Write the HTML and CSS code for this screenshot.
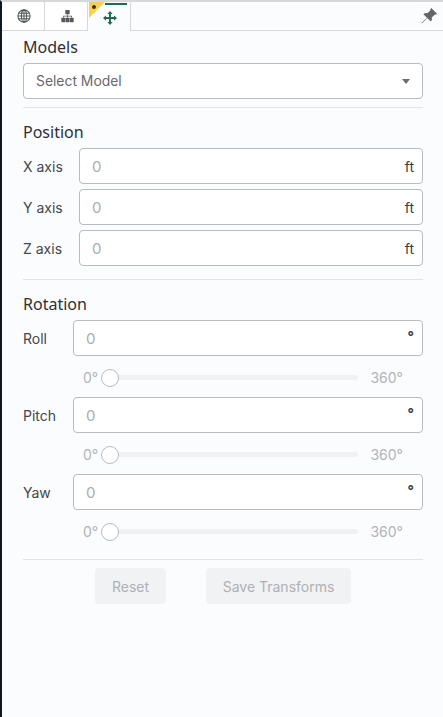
FILE: index.html
```html
<!DOCTYPE html>
<html lang="en">
<head>
    <meta charset="UTF-8">
    <title>Transforms</title>
    <link rel="stylesheet" href="styles.css">
</head>
<body>
    <div class="panel">
        <div class="tabs">
            <div class="tab">
                <svg width="14" height="14" viewBox="0 0 16 16" fill="none" stroke="#55585c" stroke-width="1.2">
                    <circle cx="8" cy="8" r="7"/>
                    <ellipse cx="8" cy="8" rx="3" ry="7"/>
                    <path d="M8 1V15M1 8H15M2 4.800H14M2 11.200H14"/>
                </svg>
            </div>
            <div class="tab">
                <svg width="15" height="14" viewBox="0 0 16 16" fill="#55585c">
                    <rect x="5.500" y="1" width="5" height="5" rx=".5"/>
                    <rect x="1" y="10" width="4.400" height="5" rx=".5"/>
                    <rect x="5.800" y="10" width="4.400" height="5" rx=".5"/>
                    <rect x="10.600" y="10" width="4.400" height="5" rx=".5"/>
                    <path d="M7.600 6h.8v1.800h4.600v2.200h-.8V8.600H8.400V10h-.8V8.600H3.800V10H3V7.800h4.600z"/>
                </svg>
            </div>
            <div class="tab tab-active">
                <span class="badge"><span class="badge-dot"></span></span>
                <svg width="14" height="14" viewBox="0 0 16 16" fill="#1f6b57">
                    <path d="M8 0 11 3.400H9.100V6.900H12.600V5L16 8 12.600 11V9.100H9.100V12.600H11L8 16 5 12.600H6.900V9.100H3.400V11L0 8 3.400 5V6.900H6.900V3.400H5Z"/>
                </svg>
            </div>
            <div class="tabs-fill">
                <svg width="18" height="18" viewBox="0 0 18 18" fill="#62666b">
                    <path d="M11.300 1 17 6.700l-1.200 1.100-.9-.4-3.200 3.200c.5 1.500.1 3-.9 4L7.300 11.100 2.400 16 1.500 16.600 2 15.600 6.900 10.700 3.400 7.200c1-1 2.500-1.400 4-.9l3.200-3.200-.4-.9z"/>
                </svg>
            </div>
        </div>

        <div class="content">
            <section class="section">
                <h2 class="title">Models</h2>
                <div class="select">
                    <span>Select Model</span>
                    <span class="caret"></span>
                </div>
            </section>

            <section class="section">
                <h2 class="title">Position</h2>
                <div class="rows">
                    <div class="row">
                        <label class="label">X axis</label>
                        <div class="input"><span class="value">0</span><span class="unit">ft</span></div>
                    </div>
                    <div class="row">
                        <label class="label">Y axis</label>
                        <div class="input"><span class="value">0</span><span class="unit">ft</span></div>
                    </div>
                    <div class="row">
                        <label class="label">Z axis</label>
                        <div class="input"><span class="value">0</span><span class="unit">ft</span></div>
                    </div>
                </div>
            </section>

            <section class="section section-rotation">
                <h2 class="title">Rotation</h2>
                <div class="row row-angle">
                    <label class="label">Roll</label>
                    <div class="input"><span class="value">0</span><span class="unit unit-deg">°</span></div>
                </div>
                <div class="slider">
                    <span>0°</span>
                    <div class="track"><span class="thumb"></span></div>
                    <span>360°</span>
                </div>
                <div class="row row-angle">
                    <label class="label">Pitch</label>
                    <div class="input"><span class="value">0</span><span class="unit unit-deg">°</span></div>
                </div>
                <div class="slider">
                    <span>0°</span>
                    <div class="track"><span class="thumb"></span></div>
                    <span>360°</span>
                </div>
                <div class="row row-angle">
                    <label class="label">Yaw</label>
                    <div class="input"><span class="value">0</span><span class="unit unit-deg">°</span></div>
                </div>
                <div class="slider">
                    <span>0°</span>
                    <div class="track"><span class="thumb"></span></div>
                    <span>360°</span>
                </div>
            </section>

            <div class="actions">
                <button class="btn btn-reset">Reset</button>
                <button class="btn">Save Transforms</button>
            </div>
        </div>
    </div>
</body>
</html>
```

FILE: styles.css
```css
* {
    margin: 0;
    padding: 0;
    box-sizing: border-box;
}

html, body {
    height: 100%;
}

body {
    background: #fbfcfe;
    font-family: Inter, "Liberation Sans", sans-serif;
    color: #3a3d40;
    overflow: hidden;
}

.panel {
    height: 100%;
    border-left: 2px solid #10181f;
    border-top: 2px solid #d6d8da;
}

/* tab strip */
.tabs {
    display: flex;
    height: 29px;
}

.tab {
    width: 43px;
    display: flex;
    align-items: center;
    justify-content: center;
    padding-left: 2px;
    border-right: 1px solid #d6d8da;
    border-bottom: 1px solid #d6d8da;
    background: #fff;
    position: relative;
}

.tab-active {
    border-bottom: none;
    background: #fbfcfe;
}

.tab-active::before {
    content: '';
    position: absolute;
    top: 1px;
    left: 17px;
    right: 3px;
    height: 2px;
    background: #1f6b57;
}

.tab-active svg {
    margin-top: 2px;
}

.badge {
    position: absolute;
    top: 0;
    left: 1px;
    width: 16px;
    height: 16px;
    background: #fbd14b;
    clip-path: polygon(0 0, 100% 0, 0 100%);
    z-index: 1;
}

.badge-dot {
    position: absolute;
    top: 3px;
    left: 3px;
    width: 4px;
    height: 4px;
    border-radius: 50%;
    background: #333;
}

.tabs-fill {
    flex: 1;
    display: flex;
    justify-content: flex-end;
    align-items: center;
    padding-right: 5px;
    border-bottom: 1px solid #d6d8da;
}

/* form */
.content {
    padding: 6px 20px 0 21px;
}

.section {
    padding-bottom: 8px;
    border-bottom: 1px solid #e3e4e6;
    margin-bottom: 14px;
}

.section:nth-child(2) {
    padding-bottom: 13px;
}

.section-rotation {
    padding-bottom: 8px;
    margin-bottom: 8px;
}

.title {
    font-family: "Noto Sans", sans-serif;
    font-size: 16px;
    font-weight: 400;
    line-height: 21px;
    color: #2e3033;
    margin-bottom: 5px;
}

.select {
    height: 36px;
    display: flex;
    align-items: center;
    justify-content: space-between;
    padding: 0 12px;
    background: #fff;
    border: 1px solid #b9bbbe;
    border-radius: 4px;
    font-size: 13.900px;
    color: #66696d;
}

.caret {
    border-left: 4.500px solid transparent;
    border-right: 4.500px solid transparent;
    border-top: 5px solid #6a6d71;
}

.rows {
    display: flex;
    flex-direction: column;
    gap: 5px;
}

.row {
    display: flex;
    align-items: center;
}

.label {
    width: 56px;
    font-size: 14px;
    color: #44474a;
}

.row-angle .label {
    width: 50px;
}

.input {
    flex: 1;
    height: 36px;
    display: flex;
    align-items: center;
    justify-content: space-between;
    padding: 0 8px 0 12px;
    background: #fff;
    border: 1px solid #b9bbbe;
    border-radius: 4px;
    font-size: 15px;
}

.value {
    color: #a9adb1;
}

.unit {
    font-size: 14px;
    color: #3a3d40;
}

.unit-deg {
    font-size: 14px;
    font-weight: 700;
    line-height: 1;
    margin-bottom: 2px;
}

.slider {
    display: flex;
    align-items: center;
    height: 41px;
    padding: 2px 20px 0 60px;
    font-size: 14px;
    color: #b1b4b8;
}

.track {
    flex: 1;
    height: 5px;
    margin: 0 12px 0 3px;
    background: #f0f1f2;
    position: relative;
    border-radius: 3px;
}

.thumb {
    position: absolute;
    left: 0;
    top: -6.500px;
    width: 18px;
    height: 18px;
    border-radius: 50%;
    background: #fff;
    border: 1px solid #b9bbbe;
}

.actions {
    display: flex;
    justify-content: center;
    gap: 40px;
}

.btn {
    height: 36px;
    width: 145px;
    border: none;
    border-radius: 4px;
    background: #f1f2f3;
    color: #aeb1b5;
    font-family: inherit;
    font-size: 14px;
}

.btn-reset {
    width: 71px;
}
```
